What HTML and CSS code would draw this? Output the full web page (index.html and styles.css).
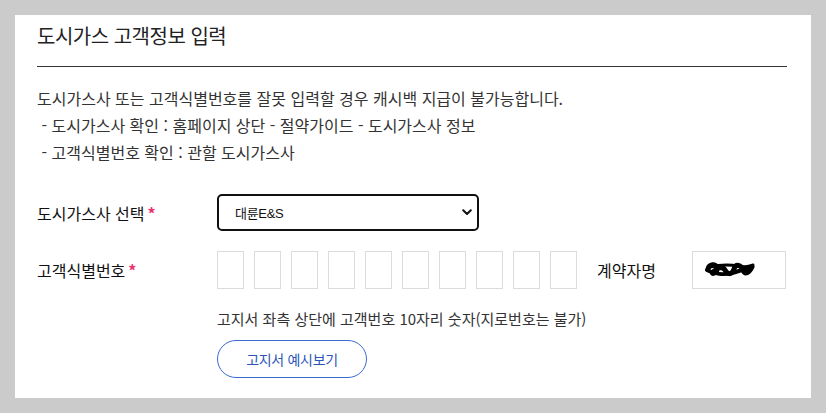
FILE: index.html
```html
<!DOCTYPE html>
<html lang="ko">
<head>
<meta charset="utf-8">
<title>도시가스 고객정보 입력</title>
<link rel="stylesheet" href="styles.css">
</head>
<body>
<div class="panel">
  <h2 class="title">도시가스 고객정보 입력</h2>
  <div class="notice">
    <p>도시가스사 또는 고객식별번호를 잘못 입력할 경우 캐시백 지급이 불가능합니다.</p>
    <p>&nbsp;- 도시가스사 확인 : 홈페이지 상단 - 절약가이드 - 도시가스사 정보</p>
    <p>&nbsp;- 고객식별번호 확인 : 관할 도시가스사</p>
  </div>
  <div class="row row-select">
    <div class="label">도시가스사 선택<span class="req">*</span></div>
    <div class="select">
      <span class="select-text">대륜E&amp;S</span>
      <svg class="chev" width="10" height="7" viewBox="0 0 10 7"><path d="M1.2 1.2 L5 5 L8.8 1.2" fill="none" stroke="#111" stroke-width="2" stroke-linecap="round" stroke-linejoin="round"/></svg>
    </div>
  </div>
  <div class="row row-id">
    <div class="label">고객식별번호<span class="req">*</span></div>
    <div class="digits">
      <span class="digit"></span><span class="digit"></span><span class="digit"></span><span class="digit"></span><span class="digit"></span>
      <span class="digit"></span><span class="digit"></span><span class="digit"></span><span class="digit"></span><span class="digit"></span>
    </div>
    <div class="name-label">계약자명</div>
    <div class="name-box">
      <svg width="52" height="20" viewBox="0 0 52 20">
        <path d="M4 9 C5 4 12 3 13 8 S6 15 9 12 S18 5 21 10 S28 15 30 9 S37 5 39 10 S45 13 48 7" fill="none" stroke="#000" stroke-width="5" stroke-linecap="round"/>
        <path d="M3 10 C10 14 20 15 28 13 S42 8 47 9" fill="none" stroke="#000" stroke-width="4" stroke-linecap="round"/>
        <path d="M6 7 C14 5 24 4 34 6 S44 6 49 5" fill="none" stroke="#000" stroke-width="3" stroke-linecap="round"/>
      </svg>
    </div>
  </div>
  <div class="hint-wrap">
    <p class="hint">고지서 좌측 상단에 고객번호 10자리 숫자(지로번호는 불가)</p>
    <button class="btn" type="button">고지서 예시보기</button>
  </div>
</div>
</body>
</html>
```
FILE: styles.css
```css
html, body {
  margin: 0;
  padding: 0;
}
body {
  background: #cbcbcb;
  padding: 15px;
  font-family: "Noto Sans CJK KR", "Noto Sans", sans-serif;
  color: #333;
}
.panel {
  background: #fff;
  height: 383px;
  box-sizing: border-box;
  padding: 0 24px 0 22px;
}
.title {
  margin: 0;
  font-size: 20px;
  font-weight: 400;
  letter-spacing: -0.5px;
  line-height: 28px;
  padding: 7px 0 16px;
  border-bottom: 1px solid #333;
  color: #222;
}
.notice {
  margin-top: 18px;
  font-size: 16px;
  line-height: 27px;
}
.notice p {
  margin: 0;
}
.row {
  display: flex;
  align-items: center;
}
.row-select {
  margin-top: 28px;
}
.row-id {
  margin-top: 20px;
}
.label {
  width: 180px;
  flex: none;
  font-size: 16px;
  font-weight: 400;
  color: #111;
}
.req {
  color: #e8336d;
  margin-left: 3px;
  font-size: 16px;
  font-weight: 700;
}
.select {
  width: 262px;
  height: 37px;
  box-sizing: border-box;
  border: 2px solid #111;
  border-radius: 5px;
  display: flex;
  align-items: center;
  padding: 0 5px 0 16px;
}
.select-text {
  font-family: "Liberation Sans", "Noto Sans CJK KR", sans-serif;
  font-size: 13px;
  color: #111;
  letter-spacing: -0.3px;
}
.chev {
  margin-left: auto;
}
.digits {
  display: flex;
  gap: 10px;
}
.digit {
  width: 27px;
  height: 38px;
  box-sizing: border-box;
  border: 1px solid #dcdcdc;
}
.name-label {
  margin-left: 20px;
  width: 95px;
  font-size: 16px;
  font-weight: 400;
  color: #111;
}
.name-box {
  width: 94px;
  height: 38px;
  box-sizing: border-box;
  border: 1px solid #dcdcdc;
  display: flex;
  align-items: center;
  padding-left: 11px;
}
.hint-wrap {
  margin-left: 180px;
  margin-top: 20px;
}
.hint {
  margin: 0;
  font-size: 15px;
  line-height: 20px;
}
.btn {
  display: block;
  margin-top: 11px;
  width: 150px;
  height: 38px;
  border: 1px solid #3a6bd0;
  border-radius: 19px;
  background: #fff;
  color: #2c55b8;
  font-family: "Noto Sans CJK KR", "Noto Sans", sans-serif;
  font-size: 14px;
  letter-spacing: -0.3px;
  padding: 0;
}
```
